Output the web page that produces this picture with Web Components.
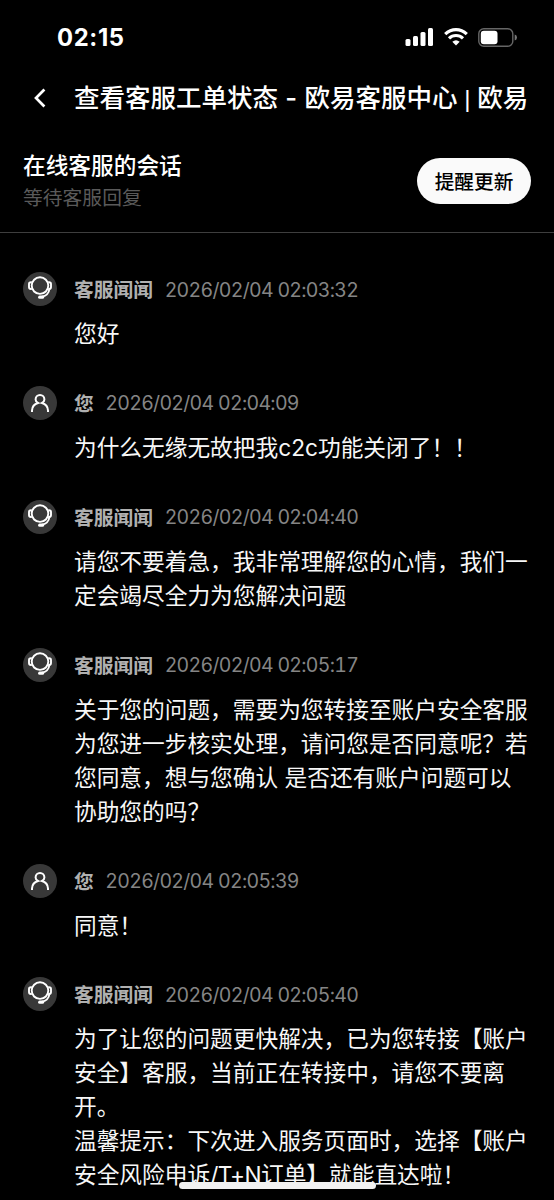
<!DOCTYPE html>
<html lang="zh-CN">
<head>
<meta charset="utf-8">
<title>查看客服工单状态</title>
<style>
html,body{margin:0;background:#000;height:100%;overflow:hidden}
body{font-family:Inter,"Noto Sans CJK SC",sans-serif;color:#fff;text-spacing-trim:space-all}
</style>
</head>
<body>
<support-app></support-app>
<script>
const define=(name,html)=>customElements.define(name,class extends HTMLElement{
  constructor(){super();const t=document.createElement('template');t.innerHTML=html;
  this.attachShadow({mode:'open'}).append(t.content.cloneNode(true));}
});

define('status-bar',`<style>
:host{display:flex;height:74px;box-sizing:border-box;padding:0 37px 0 57px;justify-content:space-between;align-items:center}
.time{font:700 23.8px/30px Inter,sans-serif;letter-spacing:.65px;padding-top:2px}
.icons{display:flex;align-items:center;gap:10px}
svg{display:block}
</style>
<span class="time">02:15</span>
<span class="icons">
<svg width="29" height="18" viewBox="0 0 29 18" fill="#fff"><rect x=".5" y="11" width="5" height="7" rx="1.5"/><rect x="8" y="8" width="5" height="10" rx="1.5"/><rect x="15.5" y="4" width="5" height="14" rx="1.5"/><rect x="23" y="0" width="5" height="18" rx="1.5"/></svg>
<svg width="24" height="18" viewBox="0 0 24 18" fill="none" stroke="#fff" stroke-width="3.2"><path d="M1.2 6.2Q6 1.7 12 1.7T22.8 6.2"/><path d="M5 10.3Q8 7.5 12 7.5T19 10.3"/><path d="M12 17.5L8.3 13.8Q12 10.8 15.7 13.8Z" fill="#fff" stroke="none"/></svg>
<svg width="39" height="19" viewBox="0 0 39 19"><rect x=".8" y=".8" width="34" height="17.4" rx="5" fill="none" stroke="#666" stroke-width="1.4"/><rect x="2.8" y="2.8" width="16.7" height="13.4" rx="3" fill="#fff"/><path d="M36.7 6.5Q39 7.2 39 9.5T36.7 12.5Z" fill="#777"/></svg>
</span>`);

define('nav-bar',`<style>
:host{display:flex;height:48px;align-items:center;padding-left:33px}
svg{flex:none;margin-right:26px}
.t{font:500 25.5px/36px Inter,"Noto Sans CJK SC",sans-serif;white-space:pre;padding-top:1px}
::slotted(.dash){letter-spacing:.4px}
::slotted(.bar){font-family:"Liberation Sans",sans-serif;font-size:24px;font-weight:400}
</style>
<svg width="15" height="20" viewBox="0 0 15 20" fill="none" stroke="#fff" stroke-width="2.7"><path d="M11.4 1.5L3 10L11.4 18.5"/></svg>
<span class="t"><slot></slot></span>`);

define('session-header',`<style>
:host{display:flex;height:111px;box-sizing:border-box;padding:0 23px;border-bottom:1px solid #3e3e3e;justify-content:space-between}
.info{padding-top:27px}
.h{font-size:22.7px;line-height:34px;font-weight:500}
.s{font-size:19.8px;line-height:28px;color:#5a5a5a;margin-top:1px}
.btn{margin-top:36px;width:114px;height:46px;border-radius:23px;background:#fafafa;color:#000;font:500 19.7px/46px Inter,"Noto Sans CJK SC",sans-serif;text-align:center;border:0;padding:1px 0 0}
</style>
<div class="info"><div class="h"><slot></slot></div><div class="s"><slot name="status"></slot></div></div>
<button class="btn"><slot name="action"></slot></button>`);

define('agent-avatar',`<style>:host{display:block;width:34px;height:34px;border-radius:50%;background:#383838}svg{display:block}</style>
<svg width="34" height="34" viewBox="0 0 34 34" fill="none" stroke="#fff" stroke-width="1.9"><circle cx="17" cy="13.6" r="8.3"/><path d="M8.8 10.2H8Q6 10.2 6 12V15Q6 17 8 17H8.8M25.2 10.2H26Q28 10.2 28 12V15Q28 17 26 17H25.2"/><path d="M26.4 17Q25.6 23.3 19 24.8"/><path d="M16.7 25.2H19.5" stroke-width="3.2" stroke-linecap="round"/></svg>`);

define('user-avatar',`<style>:host{display:block;width:34px;height:34px;border-radius:50%;background:#383838}svg{display:block}</style>
<svg width="34" height="34" viewBox="0 0 34 34" fill="none" stroke="#fff" stroke-width="2"><path d="M9 26V24.5Q9.2 18.8 15 17Q12.6 15.8 12.6 13.4A4.4 4.4 0 0 1 21.4 13.4Q21.4 15.8 19 17Q24.8 18.8 25 24.5V26"/></svg>`);

define('chat-message',`<style>
:host{display:grid;grid-template-columns:34px 1fr;column-gap:17px;row-gap:11px;margin-bottom:34.9px}
.meta{display:flex;align-items:center;gap:11.5px;height:34px;white-space:nowrap;font-size:19.8px}
.name{font-weight:700;color:#b0b0b0;margin-top:-1px}
.date{color:#858585;font-size:19.5px;font-variant-numeric:tabular-nums;letter-spacing:-.7px;padding-top:1px}
.body{grid-column:2;font-size:22.7px;line-height:34px;color:#f7f7f7;white-space:pre}
::slotted(.latin){letter-spacing:-.6px}
</style>
<slot name="avatar"></slot>
<div class="meta"><span class="name"><slot name="name"></slot></span><span class="date"><slot name="date"></slot></span></div>
<div class="body"><slot></slot></div>`);

define('home-indicator',`<style>:host{display:block;position:absolute;left:179px;bottom:11px;width:197px;height:7.5px;border-radius:4px;background:#f2f2f2}</style>`);

const messages=[
['agent','2026/02/04 02:03:32','您好'],
['user','2026/02/04 02:04:09','为什么无缘无故把我c2c功能关闭了！！'],
['agent','2026/02/04 02:04:40','请您不要着急，我非常理解您的心情，我们一<br>定会竭尽全力为您解决问题'],
['agent','2026/02/04 02:05:17','关于您的问题，需要为您转接至账户安全客服<br>为您进一步核实处理，请问您是否同意呢？若<br>您同意，想与您确认 是否还有账户问题可以<br>协助您的吗？'],
['user','2026/02/04 02:05:39','同意！'],
['agent','2026/02/04 02:05:40','为了让您的问题更快解决，已为您转接【账户<br>安全】客服，当前正在转接中，请您不要离<br>开。<br>温馨提示：下次进入服务页面时，选择【账户<br>安全风险申诉<span class="latin">/T+N</span>订单】就能直达啦！']];

define('support-app',`<style>
:host{display:block;position:relative;width:554px;height:1200px;overflow:hidden;background:#000}
main{padding:39px 23px 0}
</style>
<status-bar></status-bar>
<nav-bar>查看客服工单状态<span class="dash"> - </span>欧易客服中心<span class="bar"> | </span>欧易</nav-bar>
<session-header>在线客服的会话<span slot="status">等待客服回复</span><span slot="action">提醒更新</span></session-header>
<main>${messages.map(([who,date,text])=>`<chat-message><${who}-avatar slot="avatar"></${who}-avatar><span slot="name">${who==='agent'?'客服闻闻':'您'}</span><span slot="date">${date}</span>${text}</chat-message>`).join('')}</main>
<home-indicator></home-indicator>`);
</script>
</body>
</html>
